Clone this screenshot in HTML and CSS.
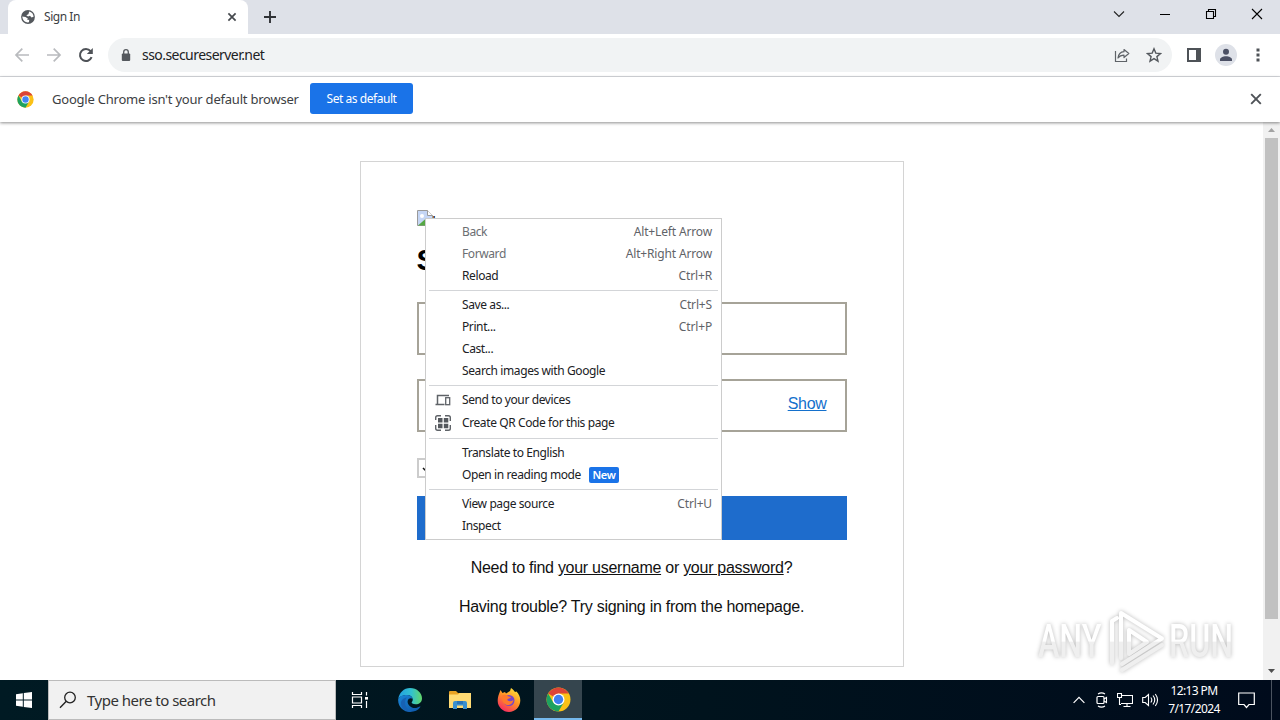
FILE: index.html
```html
<!DOCTYPE html>
<html lang="en">
<head>
    <meta charset="UTF-8">
    <meta name="viewport" content="width=device-width, initial-scale=1.0">
    <title>Sign In</title>
    <link rel="stylesheet" href="styles.css">
</head>
<body>
    <div class="tab-strip">
        <div class="tab">
            <svg class="globe" width="14" height="14" viewBox="0 0 14 14">
                <circle cx="7" cy="7" r="6.9" fill="#54585d"/>
                <path d="M1.3 6.500 4.500 7 6.800 8.500 6.300 10 8.200 9.800 8 12.300C5 13 1.500 10.800 1.300 6.500zM8.200 1.500C10.800 2.200 12.500 4 12.600 6.800L10.500 7.500 9 5.800 7 6.400 5.300 5.200 7.400 4.200z" fill="#fff"/>
            </svg>
            <span class="tab-title">Sign In</span>
            <svg width="10" height="10" viewBox="0 0 10 10"><path d="m1.4 1.4 7.2 7.2m0-7.2L1.4 8.6" stroke="#45494d" stroke-width="1.7"/></svg>
        </div>
        <svg class="new-tab" width="14" height="14" viewBox="0 0 14 14"><path d="M7 1v12M1 7h12" stroke="#303236" stroke-width="1.9"/></svg>
        <div class="window-buttons">
            <svg width="12" height="12" viewBox="0 0 12 12"><path d="m1 3.5 5 5 5-5" fill="none" stroke="#222" stroke-width="1.1"/></svg>
            <svg width="12" height="12" viewBox="0 0 12 12"><path d="M1 6.5h10" stroke="#000"/></svg>
            <svg width="12" height="12" viewBox="0 0 12 12"><path d="M1.500 3.500h7v7h-7zM3.500 3.500v-2h7v7h-2" fill="none" stroke="#000" stroke-width="1.1"/></svg>
            <svg width="12" height="12" viewBox="0 0 12 12"><path d="m1 1 10 10m0-10L1 11" stroke="#000" stroke-width="1.1"/></svg>
        </div>
    </div>

    <div class="toolbar">
        <svg width="16" height="16" viewBox="0 0 16 16"><path d="M15 8H2m6.300-6.300L2 8l6.300 6.300" fill="none" stroke="#b9bbbe" stroke-width="1.700"/></svg>
        <svg width="16" height="16" viewBox="0 0 16 16"><path d="M1 8h13M7.700 1.700 14 8l-6.300 6.300" fill="none" stroke="#b9bbbe" stroke-width="1.700"/></svg>
        <svg width="16" height="16" viewBox="0 0 16 16"><path d="M13.600 10.200A6 6 0 1 1 12.600 4.200" fill="none" stroke="#4e5257" stroke-width="2"/><path d="M14.800 1v6H8.800z" fill="#4e5257"/></svg>
        <div class="address">
            <svg width="10" height="13" viewBox="0 0 10 13"><rect x=".8" y="4.500" width="8.400" height="7.500" rx="1" fill="#54585d"/><path d="M2.700 5V3a2.300 2.300 0 0 1 4.600 0v2" fill="none" stroke="#54585d" stroke-width="1.300"/></svg>
            <span class="url">sso.secureserver.net</span>
            <svg class="share" width="16" height="16" viewBox="0 0 16 16"><path d="M1.500 4v10.500H12.500V11.500" fill="none" stroke="#5f6368" stroke-width="1.200"/><path d="M10 2.500 14.800 6.500 10 10.500V8.200C7 8.200 5.500 9 4 11 4.400 7.500 6.300 5 10 4.700z" fill="none" stroke="#5f6368" stroke-width="1.200" stroke-linejoin="round"/></svg>
            <svg width="16" height="16" viewBox="0 0 16 16"><path d="m8 1.800 1.800 4.300 4.700.4-3.600 3.100 1.100 4.600L8 11.700l-4 2.500 1.100-4.600-3.600-3.100 4.700-.4z" fill="none" stroke="#54585d" stroke-width="1.400"/></svg>
        </div>
        <svg class="side-panel" width="14" height="14" viewBox="0 0 14 14"><path d="M0 0h14v14H0zM2 2v10h7V2z" fill="#4e5257" fill-rule="evenodd"/></svg>
        <svg class="avatar" width="22" height="22" viewBox="0 0 22 22"><circle cx="11" cy="11" r="11" fill="#dee1e8"/><circle cx="11" cy="7.800" r="3" fill="#4b5064"/><path d="M5 17v-1.500c0-2 3-3.300 6-3.300s6 1.300 6 3.300V17z" fill="#4b5064"/></svg>
        <svg class="dots" width="4" height="14" viewBox="0 0 4 14"><path d="M.5.5h3v3h-3zM.5 5.500h3v3h-3zM.5 10.500h3v3h-3z" fill="#4e5257"/></svg>
    </div>

    <div class="infobar">
        <svg class="chrome-logo" viewBox="0 0 48 48">
            <circle cx="24" cy="24" r="23" fill="#fbc116"/>
            <path d="M24 24 4.100 12.500A23 23 0 0 1 43.900 12.500H24z" fill="#dc4437"/>
            <path d="M4.100 12.500A23 23 0 0 0 24 47l10-17.200L24 24 14 29.800z" fill="#1da260"/>
            <circle cx="24" cy="24" r="11.500" fill="#fff"/>
            <circle cx="24" cy="24" r="9" fill="#4285f4"/>
        </svg>
        <span class="infobar-text">Google Chrome isn't your default browser</span>
        <button class="default-button"><span>Set as default</span></button>
        <svg class="infobar-close" width="12" height="12" viewBox="0 0 12 12"><path d="m1.200 1.200 9.600 9.600m0-9.600-9.600 9.600" stroke="#4e5257" stroke-width="1.900"/></svg>
    </div>

    <div class="viewport">
        <main class="page">
            <div class="card">
                <div class="logo">
                    <svg width="16" height="16" viewBox="0 0 16 16"><path d="M.5.5h10l5 5v10H.5z" fill="#c5d6f5" stroke="#9a9a9a"/><path d="M10.500.5v5h5" fill="#fff" stroke="#9a9a9a"/><path d="M1 15.500 9 8.500v7z" fill="#55a844"/><circle cx="5" cy="6" r="2" fill="#fff"/></svg>
                    <span>'</span>
                </div>
                <h1>Sign In</h1>
                <div class="field"></div>
                <div class="field password"><a href="#">Show</a></div>
                <div class="checkbox"><svg width="14" height="14" viewBox="0 0 14 14"><path d="m2 6 4 4 6-7" fill="none" stroke="#111" stroke-width="1.500"/></svg></div>
                <div class="submit"></div>
                <p class="find">Need to find <a href="#">your username</a> or <a href="#">your password</a>?</p>
                <p class="trouble">Having trouble? Try signing in from the homepage.</p>
            </div>
        </main>
        <div class="scrollbar">
            <svg width="17" height="16" viewBox="0 0 17 16"><path d="m5 10 3.500-4L12 10z" fill="#a3a3a3"/></svg>
            <div class="thumb"></div>
            <svg width="17" height="17" viewBox="0 0 17 17"><path d="m5 6 3.500 4L12 6z" fill="#505050"/></svg>
        </div>

        <div class="watermark">
            <span>ANY</span>
            <svg width="57" height="66" viewBox="0 0 57 66">
                <defs><linearGradient id="shine" gradientUnits="userSpaceOnUse" x1="0" y1="0" x2="0" y2="66"><stop offset=".5" stop-color="#fff"/><stop offset=".52" stop-color="#efefef"/></linearGradient></defs>
                <path d="M4 55V13l5-3M13 50V5l41 25.500L14 56M14 62l40-25M21 22v24l18-12z" fill="none" stroke="url(#shine)" stroke-width="4" stroke-linejoin="round" stroke-linecap="round"/>
            </svg>
            <span>RUN</span>
        </div>

        <div class="menu">
            <div class="item disabled"><span>Back</span><kbd>Alt+Left Arrow</kbd></div>
            <div class="item disabled"><span>Forward</span><kbd>Alt+Right Arrow</kbd></div>
            <div class="item"><span>Reload</span><kbd>Ctrl+R</kbd></div>
            <hr>
            <div class="item"><span>Save as...</span><kbd>Ctrl+S</kbd></div>
            <div class="item"><span>Print...</span><kbd>Ctrl+P</kbd></div>
            <div class="item"><span>Cast...</span></div>
            <div class="item"><span>Search images with Google</span></div>
            <hr>
            <div class="item with-icon">
                <svg width="16" height="16" viewBox="0 0 16 16"><path d="M2.500 12V3.500H14M.5 12.500h9" fill="none" stroke="#5f6368" stroke-width="1.500"/><rect x="10.700" y="5.700" width="4" height="7" fill="none" stroke="#5f6368" stroke-width="1.300"/></svg>
                <span>Send to your devices</span>
            </div>
            <div class="item with-icon qr">
                <svg width="16" height="16" viewBox="0 0 16 16"><path d="M.7 5V2.500Q.7.7 2.500.7H6M10 .7h3.500q1.800 0 1.800 1.800V6M15.300 10v3.500q0 1.800-1.800 1.800H10M6 15.300H2.500Q.7 15.300.7 13.500V10" fill="none" stroke="#5f6368" stroke-width="1.400"/><path d="M3 3h4.500v4.500H3zM8.800 3h4.500v4.500H8.800zM3 8.800h4.500v4.500H3zM8.800 8.800h4.500v4.500H8.800z" fill="#54585d"/></svg>
                <span>Create QR Code for this page</span>
            </div>
            <hr>
            <div class="item"><span>Translate to English</span></div>
            <div class="item"><span>Open in reading mode</span><b class="new">New</b></div>
            <hr>
            <div class="item"><span>View page source</span><kbd>Ctrl+U</kbd></div>
            <div class="item"><span>Inspect</span></div>
        </div>
    </div>

    <footer class="taskbar">
        <div class="start"><svg width="16" height="16" viewBox="0 0 16 16"><path d="m0 2.200 6.800-1V7.500H0zM7.800 1 16 0v7.500H7.800zM0 8.500h6.800v6.300l-6.800-1zM7.800 8.500H16V16l-8.200-1z" fill="#fff"/></svg></div>
        <div class="search">
            <svg width="18" height="18" viewBox="0 0 18 18"><circle cx="11" cy="6.500" r="5.300" fill="none" stroke="#222" stroke-width="1.300"/><path d="m7.300 10.300-6.300 6.500" stroke="#222" stroke-width="1.400"/></svg>
            <span>Type here to search</span>
        </div>
        <div class="app task-view"><svg width="18" height="16" viewBox="0 0 18 16"><path d="M1.500 0v2.500h9V0M1.500 16v-2.500h9V16M1.500 5h9v6h-9zM15.500 0v3.500M15.500 9v7" fill="none" stroke="#fff" stroke-width="1.200"/><path d="M14 5h3v2.600h-3z" fill="#fff"/></svg></div>
        <div class="app">
            <svg width="24" height="24" viewBox="0 0 24 24">
                <defs>
                    <linearGradient id="edgeTop" x1="0" x2="1"><stop offset="0" stop-color="#22a0e2"/><stop offset=".55" stop-color="#32c1cf"/><stop offset="1" stop-color="#62d66a"/></linearGradient>
                    <linearGradient id="edgeBase" x1="0" x2="1" y2="1"><stop offset="0" stop-color="#1a86d6"/><stop offset="1" stop-color="#0d55a8"/></linearGradient>
                </defs>
                <path d="M.3 11C1 4.800 6 0 12 0c7 0 12 5 12 10.200 0 4-3 6-6.300 6-3 0-4.300-1.200-4-2 .8-1.200 1.200-1.800 1-3.200C14.300 8.500 12 7 9 7 5 7 1.200 9 .3 11z" fill="url(#edgeTop)"/>
                <path d="M.2 11.200C1 8.500 5 7 9 7c3 0 5 1.500 5.700 4-1.600-1.500-4.200-.8-4.900 1.500-1 3.500 2.500 7.500 7 7.500 2 0 3.500-.6 5-1.500.4-.2.800.2.500.6C20.200 22.500 16.500 24 12 24 5.500 24-.4 18.500.2 11.200z" fill="url(#edgeBase)"/>
                <path d="M8.800 9.500c-3.600 4.500-1.200 12.200 5 14.300C7 24 3 20 3 15c0-2.700 2.300-5 5.800-5.500z" fill="#1761b3"/>
            </svg>
        </div>
        <div class="app">
            <svg width="22" height="18" viewBox="0 0 22 18"><path d="M0 1q0-1 1-1h6l2 2h12v4H0z" fill="#e8a224"/><path d="M0 3.500h9l1.500-1.500H22V17H0z" fill="#ffdb74"/><path d="M4 18v-6q0-2 2-2h10q2 0 2 2v6h-4v-3.500H8V18z" fill="#3b91cf"/><path d="M8 10h6v3H8z" fill="#2a74b8"/></svg>
        </div>
        <div class="app">
            <svg width="24" height="24" viewBox="0 0 24 24">
                <defs><linearGradient id="fox" x1=".8" y1="0" x2=".2" y2="1"><stop offset="0" stop-color="#ffe63c"/><stop offset=".45" stop-color="#ff9326"/><stop offset="1" stop-color="#f62266"/></linearGradient></defs>
                <path d="M2 6 3.500 2l2 3L8 4l1 1.500L13 3 14 0c2 1.200 3 2.500 4 4l1.500-.5C22 6 23.300 9 23.300 12.500 23.300 19 18 24 12 24S.7 19 .7 13C.7 10 1.200 8 2 6z" fill="url(#fox)"/>
                <circle cx="12" cy="12.500" r="5.500" fill="#7846c9"/>
                <path d="M5 7.500c2-1.500 5-.5 6 .8l3 .7c-.5 1.500-3 1.500-3.700 2.700.7 1.800 3.500 2 6.200.3-.7 4.200-4.500 6-7.500 4.700C5.500 15.300 4.500 11 5 7.500z" fill="#ff7a2c"/>
            </svg>
        </div>
        <div class="app active">
            <svg class="chrome-logo large" viewBox="0 0 48 48">
                <circle cx="24" cy="24" r="23" fill="#fbc116"/>
                <path d="M24 24 4.100 12.500A23 23 0 0 1 43.900 12.500H24z" fill="#dc4437"/>
                <path d="M4.100 12.500A23 23 0 0 0 24 47l10-17.200L24 24 14 29.800z" fill="#1da260"/>
                <circle cx="24" cy="24" r="11.500" fill="#fff"/>
                <circle cx="24" cy="24" r="9" fill="#3f7ff0"/>
            </svg>
        </div>
        <div class="tray">
            <svg width="12" height="16" viewBox="0 0 12 16"><path d="m.6 10.800 5.400-5.400 5.400 5.400" fill="none" stroke="#fff" stroke-width="1.200"/></svg>
            <svg width="14" height="16" viewBox="0 0 14 16"><rect x="3" y="4.500" width="7" height="7" rx="1" fill="none" stroke="#fff" stroke-width="1.200"/><path d="m10 7 2.500-1.500v5L10 9M4 2q3.500-2.300 7 0M4 14q3.500 2.300 7 0" fill="none" stroke="#fff" stroke-width="1.100"/></svg>
            <svg width="16" height="16" viewBox="0 0 16 16"><path d="M5 3.500h10.500v8H4M10 11.500v3M6.500 14.500h7M.5 1.500h4v4h-4zM2.500 5.500v7H4" fill="none" stroke="#fff" stroke-width="1.100"/></svg>
            <svg width="17" height="16" viewBox="0 0 17 16"><path d="M.7 5.500h2.500L6.500 2.500v11L3.200 10.500H.7zM8.800 5.500q2 2.500 0 5M11 3.500q3.500 4.500 0 9M13.300 2q4.500 6 0 12" fill="none" stroke="#fff" stroke-width="1.100"/></svg>
        </div>
        <div class="clock"><span>12:13 PM</span><span>7/17/2024</span></div>
        <svg class="notice" width="17" height="17" viewBox="0 0 17 17"><path d="M.7 1h15.600v11.500H11l-2.500 3-2.500-3H.7z" fill="none" stroke="#fff" stroke-width="1.200"/></svg>
    </footer>
</body>
</html>
```
FILE: styles.css
```css
* {
    box-sizing: border-box;
}
body {
    margin: 0;
    width: 1280px;
    height: 720px;
    display: flex;
    flex-direction: column;
    overflow: hidden;
    background: #fff;
    font-family: "Noto Sans", "Open Sans", sans-serif;
    font-size: 12px;
    color: #202124;
}
svg {
    display: block;
    flex: none;
}
span, kbd, p, a {
    white-space: nowrap;
}

/* Browser frame */
.tab-strip {
    height: 34px;
    flex: none;
    display: flex;
    align-items: center;
    background: #dee1e8;
    padding-left: 8px;
}
.tab {
    width: 240px;
    height: 34px;
    display: flex;
    align-items: center;
    padding: 0 11px 0 13px;
    background: #fff;
    border-radius: 8px 8px 0 0;
}
.tab-title {
    flex: 1;
    margin-top: -1px;
    margin-left: 9px;
    letter-spacing: -0.45px;
    color: #3c4043;
}
.new-tab {
    margin-left: 15px;
}
.window-buttons {
    margin-left: auto;
    margin-top: -6px;
    padding-right: 17px;
    display: flex;
    gap: 34px;
}
.toolbar {
    height: 43px;
    flex: none;
    display: flex;
    align-items: center;
    gap: 16px;
    padding: 0 20px 0 14px;
    border-bottom: 1px solid #dadce0;
}
.address {
    flex: none;
    width: 1064px;
    height: 34px;
    margin-left: -2px;
    padding: 0 10px 0 13px;
    display: flex;
    align-items: center;
    background: #f1f3f4;
    border-radius: 17px;
}
.url {
    margin-left: 11px;
    margin-top: -1px;
    font-size: 14px;
    letter-spacing: -0.55px;
}
.share {
    margin-left: auto;
    margin-right: 16px;
}
.side-panel {
    margin-left: -1px;
}
.avatar {
    margin-left: -2px;
}
.dots {
    margin-left: 3px;
}
.infobar {
    position: relative;
    z-index: 1;
    height: 45px;
    flex: none;
    display: flex;
    align-items: center;
    padding: 0 18px 0 17px;
    background: #fff;
    box-shadow: 0 1px 3px rgba(0, 0, 0, 0.45);
}
.chrome-logo {
    width: 17px;
    height: 17px;
}
.chrome-logo.large {
    width: 25px;
    height: 25px;
}
.infobar-text {
    width: 246px;
    margin: -2px 12px 0 18px;
    font-size: 13px;
    letter-spacing: -0.22px;
    color: #3c4043;
}
.default-button {
    width: 103px;
    height: 31px;
    margin-top: -2px;
    padding: 0 0 1px;
    border: 0;
    border-radius: 3px;
    background: #1a73e8;
    color: #fff;
    font: 12px "Noto Sans", sans-serif;
    letter-spacing: -0.45px;
}
.infobar-close {
    margin-left: auto;
    margin-top: -2px;
}

/* Page */
.viewport {
    position: relative;
    flex: 1;
    min-height: 0;
    display: flex;
}
.page {
    width: 1263px;
    padding-top: 39px;
    font-family: "Liberation Sans", Arial, sans-serif;
    font-size: 16px;
    color: #111;
}
.card {
    width: 544px;
    height: 506px;
    margin: 0 auto;
    padding: 48px 56px;
    border: 1px solid #d4d4d4;
}
.logo {
    height: 16px;
    display: flex;
    line-height: 20px;
}
.logo span {
    margin-top: 3px;
}
h1 {
    height: 34px;
    margin: 17px 0 25px;
    font-size: 30px;
    line-height: 34px;
    color: #000;
}
.field {
    height: 53px;
    margin-bottom: 24px;
    border: 2px solid #a6a398;
}
.password {
    display: flex;
    justify-content: flex-end;
    padding: 14px 18px;
    margin-bottom: 26px;
}
.password a {
    color: #1470cc;
    letter-spacing: -0.3px;
    line-height: 18px;
}
.checkbox {
    width: 20px;
    height: 20px;
    padding: 2px;
    border: 2px solid #ccc;
}
.submit {
    height: 44px;
    margin-top: 18px;
    background: #1e6ccc;
}
.card p {
    margin: 18px 0 0;
    line-height: 19px;
    text-align: center;
    letter-spacing: -0.27px;
}
.card .trouble {
    margin-top: 20px;
}
.card p a {
    color: #111;
}
.scrollbar {
    width: 17px;
    background: #f1f1f1;
    display: flex;
    flex-direction: column;
}
.thumb {
    width: 13px;
    height: 481px;
    margin: 0 2px auto;
    background: #c1c1c1;
}

/* Context menu */
.menu {
    position: absolute;
    left: 425px;
    top: 96px;
    width: 297px;
    height: 322px;
    padding: 2px 3px;
    background: #fff;
    border: 1px solid #ccc;
}
.item {
    height: 22px;
    padding: 0 6px 0 33px;
    display: flex;
    align-items: center;
    letter-spacing: -0.4px;
}
.item span, .item kbd {
    margin-top: -1px;
}
.item kbd {
    margin-left: auto;
    font-family: inherit;
    font-size: 12px;
    letter-spacing: -0.15px;
    color: #5f6368;
}
.disabled {
    color: #6b6e72;
}
.with-icon {
    padding-left: 6px;
    gap: 11px;
}
.qr {
    height: 24px;
}
.menu hr {
    height: 1px;
    margin: 3px 0;
    border: 0;
    background: #d3d5d8;
}
.new {
    margin-left: 8px;
    width: 30px;
    height: 16px;
    border-radius: 2px;
    background: #1a73e8;
    color: #fff;
    font-size: 11px;
    font-weight: 600;
    line-height: 16px;
    text-align: center;
}

.watermark {
    position: absolute;
    left: 1038px;
    top: 486px;
    height: 66px;
    display: flex;
    align-items: center;
    filter: drop-shadow(0 0 2px rgba(0, 0, 0, 0.28));
}
/* Letters are squeezed to 70%, the margin takes back the unused width */
.watermark span {
    width: 94px;
    margin-right: -24px;
    font: 500 46px/66px "Roboto", sans-serif;
    color: transparent;
    background: linear-gradient(#fff 50%, #efefef 52%);
    background-clip: text;
    -webkit-background-clip: text;
    transform: scaleX(0.7);
    transform-origin: left;
}
.watermark svg {
    margin-right: 4px;
}

/* Taskbar */
.taskbar {
    height: 40px;
    flex: none;
    display: flex;
    align-items: center;
    background: linear-gradient(90deg, #001a23, #00131d 55%, #000b1c);
    color: #fff;
}
.start, .app {
    width: 48px;
    height: 40px;
    display: flex;
    align-items: center;
    justify-content: center;
}
.app {
    width: 49.5px;
}
.task-view {
    padding-right: 2px;
}
.search {
    width: 288px;
    height: 40px;
    display: flex;
    align-items: center;
    padding-left: 10px;
    gap: 10px;
    background: #f1f1f1;
    border: 1px solid #bbb;
    color: #333;
    font-size: 15px;
    letter-spacing: -0.5px;
}
.active {
    width: 48px;
    background: #35454e;
    border-bottom: 2px solid #76b9ed;
}
.tray {
    margin-left: auto;
    display: flex;
    gap: 9px;
}
.clock {
    width: 60px;
    margin-left: 5px;
    display: flex;
    flex-direction: column;
    align-items: center;
    line-height: 18px;
    letter-spacing: -0.6px;
}
.notice {
    margin: 0 8px 0 14px;
    padding-right: 0;
}
.taskbar::after {
    content: "";
    width: 8px;
    height: 40px;
    margin-right: 8px;
    border-right: 1px solid #4a5360;
}
```
